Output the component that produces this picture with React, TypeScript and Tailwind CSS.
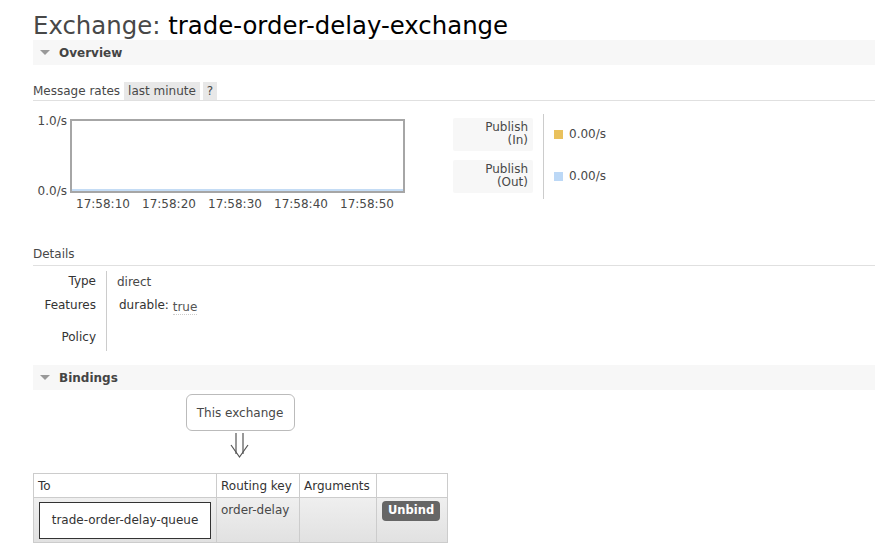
import React from 'react';

const font = { fontFamily: '"DejaVu Sans", Verdana, sans-serif' };

const SectionBar = ({ title }: { title: string }) => (
  <div className="flex items-center h-[25px] bg-[#f7f7f7] pl-[7px] gap-[9px]">
    <span className="w-0 h-0 border-l-[5px] border-r-[5px] border-t-[5px] border-l-transparent border-r-transparent border-t-[#999]" />
    <span className="text-[12px] font-bold text-[#444]">{title}</span>
  </div>
);

const times = ['17:58:10', '17:58:20', '17:58:30', '17:58:40', '17:58:50'];

const App: React.FC = () => {
  return (
    <div className="min-h-screen bg-white text-[#484848] pl-[33px] overflow-hidden" style={font}>
      <h1 className="pt-[11px] text-[24.4px] leading-[29px] text-[#484848] whitespace-nowrap">
        Exchange: <span className="text-black">trade-order-delay-exchange</span>
      </h1>

      <SectionBar title="Overview" />

      {/* message rates */}
      <div className="mt-[17px] flex items-center h-[18px] text-[12px] border-b border-[#e0e0e0] box-content">
        <span className="mr-[4px]">Message rates</span>
        <span className="bg-[#e8e8e8] px-[4px] h-[18px] flex items-center">last minute</span>
        <span className="bg-[#e8e8e8] ml-[3px] px-[4px] h-[18px] flex items-center">?</span>
      </div>

      <div className="flex mt-[13px]">
        {/* chart */}
        <div className="flex flex-col">
          <div className="flex items-start">
            <div className="w-[37px] h-[84px] flex flex-col justify-between text-[12px] leading-[14px] text-[#484848] pr-[3px] text-right">
              <span>1.0/s</span>
              <span>0.0/s</span>
            </div>
            <div className="w-[335px] h-[74px] border-2 border-[#a6a6a6] flex flex-col justify-end mt-[5px]">
              <div className="h-[2px] bg-[#c4dcf5]" />
            </div>
          </div>
          <div className="flex ml-[43px] -mt-[3px] gap-[11px] text-[12px] text-[#484848]">
            {times.map((t) => (
              <span key={t} className="w-[55px]">{t}</span>
            ))}
          </div>
        </div>

        {/* legend */}
        <div className="ml-[48px] flex">
          <div className="flex flex-col gap-[9px] pt-[4px]">
            <div className="w-[80px] h-[33px] bg-[#f7f7f7] rounded-[2px] text-[12px] leading-[13px] text-right pr-[5px] pt-[3px] text-[#484848]">
              Publish<br />(In)
            </div>
            <div className="w-[80px] h-[33px] bg-[#f7f7f7] rounded-[2px] text-[12px] leading-[13px] text-right pr-[5px] pt-[3px] text-[#484848]">
              Publish<br />(Out)
            </div>
          </div>
          <div className="ml-[10px] border-l border-[#ccc] h-[85px] pl-[10px] flex flex-col text-[12px]">
            <div className="flex items-center gap-[6px] mt-[11px]">
              <span className="w-[9px] h-[9px] bg-[#e9c15d]" />
              <span>0.00/s</span>
            </div>
            <div className="flex items-center gap-[6px] mt-[24px]">
              <span className="w-[9px] h-[9px] bg-[#bcd8f6]" />
              <span>0.00/s</span>
            </div>
          </div>
        </div>
      </div>

      {/* details */}
      <div className="mt-[32px] text-[12px] border-b border-[#e0e0e0] pb-[2px]">Details</div>
      <div className="flex mt-[5px] text-[12px]">
        <div className="w-[63px] text-right text-[#333] flex flex-col">
          <span className="h-[20px] leading-[20px]">Type</span>
          <span className="h-[28px] leading-[28px]">Features</span>
          <span className="h-[32px] leading-[36px]">Policy</span>
        </div>
        <div className="ml-[10px] border-l border-[#ccc] h-[80px] pl-[10px] flex flex-col text-[#484848]">
          <span className="h-[20px] leading-[22px]">direct</span>
          <span className="h-[28px] leading-[28px] pl-[2px] text-[#333]">
            durable: <span className="text-[#555] border-b border-dotted border-[#ccc] relative top-[2px]">true</span>
          </span>
        </div>
      </div>

      <div className="mt-[14px]">
        <SectionBar title="Bindings" />
      </div>

      {/* binding diagram */}
      <div className="w-[414px] flex flex-col items-center">
        <div className="mt-[4px] w-[109px] h-[37px] border border-[#bbb] rounded-[6px] flex items-center justify-center text-[12px] text-[#484848]">
          This exchange
        </div>
        <svg width="22" height="26" viewBox="0 0 22 26" className="mt-[2px]" fill="none" stroke="#555" strokeWidth="1.2">
          <line x1="7" y1="0" x2="7" y2="21" />
          <line x1="14" y1="0" x2="14" y2="21" />
          <polyline points="2,12 10.5,24 19,12" />
        </svg>
      </div>

      <table className="mt-[14px] border-collapse text-[12px] text-[#333]">
        <thead>
          <tr className="h-[24px] bg-white">
            <th className="w-[183px] border border-[#ccc] text-left font-normal px-[4px]">To</th>
            <th className="w-[83px] border border-[#ccc] text-left font-normal px-[4px]">Routing key</th>
            <th className="w-[77px] border border-[#ccc] text-left font-normal px-[4px]">Arguments</th>
            <th className="w-[71px] border border-[#ccc]" />
          </tr>
        </thead>
        <tbody>
          <tr className="h-[45px] bg-gradient-to-b from-[#efefef] to-[#e1e1e1]">
            <td className="border border-[#ccc] px-[5px] py-[3px]">
              <div className="h-[37px] bg-white border border-[#333] flex items-center justify-center text-[#333]">
                trade-order-delay-queue
              </div>
            </td>
            <td className="border border-[#ccc] px-[4px] align-top pt-[3px] text-[#484848]">order-delay</td>
            <td className="border border-[#ccc]" />
            <td className="border border-[#ccc] align-top pt-[3px] pl-[5px]">
              <span className="inline-flex items-center h-[20px] px-[6px] bg-[#666] text-white text-[11.5px] font-bold rounded-[4px]">Unbind</span>
            </td>
          </tr>
        </tbody>
      </table>
    </div>
  );
};

export default App;
